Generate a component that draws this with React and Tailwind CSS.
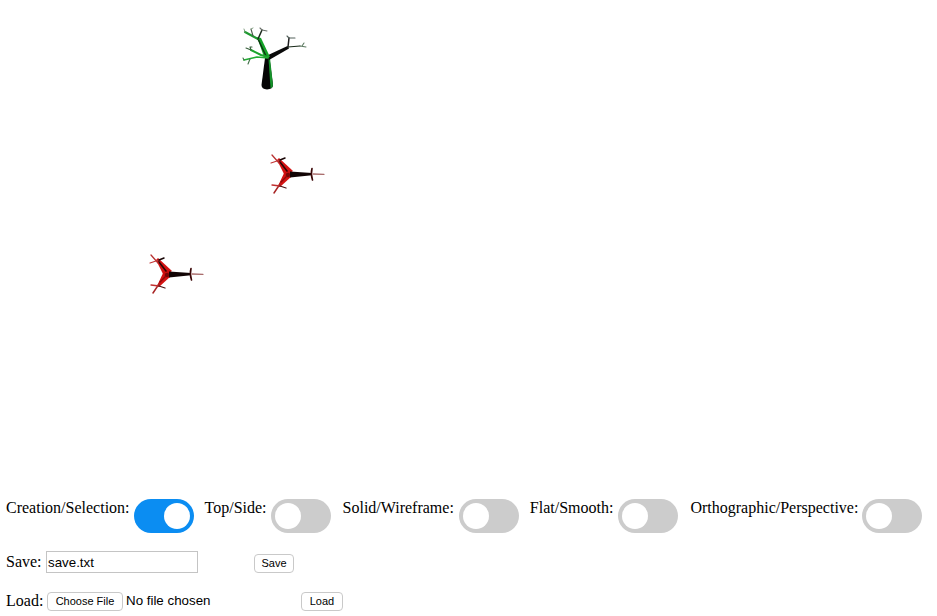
function Toggle({ on }) {
  return (
    <div className={`relative h-[34px] w-[60px] shrink-0 rounded-full ${on ? "bg-[#0b8df2]" : "bg-[#cccccc]"}`}>
      <div className={`absolute top-1 h-[26px] w-[26px] rounded-full bg-white ${on ? "left-[30px]" : "left-1"}`} />
    </div>
  );
}

function Labeled({ label, on, className }) {
  return (
    <div className={`flex items-start ${className}`}>
      <span className="text-base leading-[18px] text-black">{label}</span>
      <Toggle on={on} />
    </div>
  );
}

function Star({ x = 0, y = 0 }) {
  return (
    <g transform={`translate(${x} ${y})`} fill="none" strokeLinecap="round">
      <polygon points="277,160 279,158 293,171 285,176" fill="#d41212" />
      <polygon points="285,171 292,176 280,187 278,186" fill="#d41212" />
      <circle cx="288.5" cy="174" r="3.8" fill="#c90f0f" />
      <polygon points="290,171.5 312,173 312,175.2 290,177.5" fill="#120404" />
      <path d="M287 171 L280 162" stroke="#2a0505" strokeWidth="1.6" />
      <path d="M286 177 L281 182" stroke="#8a0a0a" strokeWidth="1.4" />
      <circle cx="288" cy="175" r="2.2" fill="#7c0707" />
      <path d="M312 168.5 Q310.5 174 312.5 180" stroke="#3a0606" strokeWidth="1.6" />
      <path d="M313 174 L324 174.3" stroke="#a86a6a" strokeWidth="1.3" />
      <path d="M272 155 L279 163" stroke="#b83232" strokeWidth="1.3" />
      <path d="M271 163 L280 160" stroke="#c23636" strokeWidth="1.2" />
      <path d="M280 160 L285 158" stroke="#1a0606" strokeWidth="1.5" />
      <path d="M280 184 L274 193" stroke="#a82424" strokeWidth="1.5" />
      <path d="M272 185 L280 186" stroke="#c03030" strokeWidth="1.3" />
      <path d="M280 186 L286 188" stroke="#4a1414" strokeWidth="1.3" />
    </g>
  );
}

function Tree() {
  return (
    <g fill="none" strokeLinecap="round" strokeLinejoin="round">
      <path d="M265 58 L269.5 58 L273 85 Q273 89 267 89.5 Q261.5 89 261.5 85 Z" fill="#050505" />
      <polygon points="268.5,59 270,58 273,85 272,88 270.5,88" fill="#15922a" />
      <polygon points="266,56 269,60 289,48.5 287.5,46" fill="#0a0a0a" />
      <polygon points="264,57 270,57 261,38 257,37" fill="#14a328" />
      <path d="M266 56 L258.5 40" stroke="#0c3510" strokeWidth="1.4" />
      <path d="M258 39 L245 32" stroke="#1f9a30" strokeWidth="2.2" />
      <path d="M253 36 L251 29" stroke="#4c5a4c" strokeWidth="1.1" />
      <path d="M245 32 L244 29 M251 29 L253 28" stroke="#84a084" strokeWidth="1" />
      <path d="M258 39 L262 30" stroke="#1c2a1c" strokeWidth="1.5" />
      <path d="M262 30 L260 28 M262 30 L267 31" stroke="#6a706a" strokeWidth="1.1" />
      <path d="M268 57 L261 55 L251 50" stroke="#1aa52c" strokeWidth="2" />
      <path d="M251 50 L246 48 M251 50 L250 47 L252 47" stroke="#38603c" strokeWidth="1.1" />
      <path d="M268 58 L257 57 L244 60" stroke="#22ad34" strokeWidth="1.6" />
      <path d="M250 59 L248 64 M244 60 L243 58" stroke="#3f7046" strokeWidth="1.1" />
      <path d="M288 47 L289 38" stroke="#1c1c1c" strokeWidth="1.5" />
      <path d="M289 38 L287 36 M289 38 L295 38" stroke="#52605a" strokeWidth="1.1" />
      <path d="M288 47 L300 46" stroke="#1a2a1a" strokeWidth="1.2" />
      <path d="M300 46 L306 47 M302 46 L304 43" stroke="#5c7a60" strokeWidth="1.1" />
    </g>
  );
}

function Btn({ children, className = "" }) {
  return (
    <button
      type="button"
      className={`flex h-[19px] items-center justify-center rounded-[4px] border border-[#c9c9c9] bg-white font-['Liberation_Sans',Arial,sans-serif] text-[11px] leading-none text-black ${className}`}
    >
      {children}
    </button>
  );
}

export default function App() {
  return (
    <div className="min-h-[616px] w-[937px] bg-white font-['Liberation_Serif','Times_New_Roman',serif]">
      <svg width="937" height="490" viewBox="0 0 937 490" className="block blur-[0.4px]">
        <Tree />
        <Star />
        <Star x={-121} y={100} />
      </svg>
      <div className="flex items-start pl-[6px] pt-[9px]">
        <Labeled label="Creation/Selection:" on className="mr-[11px] gap-1" />
        <Labeled label="Top/Side:" className="mr-[12px] gap-1" />
        <Labeled label="Solid/Wireframe:" className="mr-[11px] gap-[5px]" />
        <Labeled label="Flat/Smooth:" className="mr-[12px] gap-[5px]" />
        <Labeled label="Orthographic/Perspective:" className="gap-1" />
      </div>
      <div className="mt-[18px] flex items-center pl-[6px]">
        <span className="w-[40px] text-base leading-[22px] text-black">Save:</span>
        <input
          defaultValue="save.txt"
          className="h-[22px] w-[152px] border border-[#c4c4c4] px-px font-['Liberation_Sans',Arial,sans-serif] text-[13.33px] text-black outline-none"
        />
        <Btn className="ml-[56px] mt-[2px] w-[40px]">Save</Btn>
      </div>
      <div className="mt-[19px] flex items-start pl-[6px]">
        <span className="w-[41px] text-base leading-[17px] text-black">Load:</span>
        <Btn className="w-[76px]">Choose File</Btn>
        <span className="ml-[3px] w-[175px] font-['Liberation_Sans',Arial,sans-serif] text-[13.33px] leading-[17px] text-black">No file chosen</span>
        <Btn className="w-[42px]">Load</Btn>
      </div>
    </div>
  );
}
